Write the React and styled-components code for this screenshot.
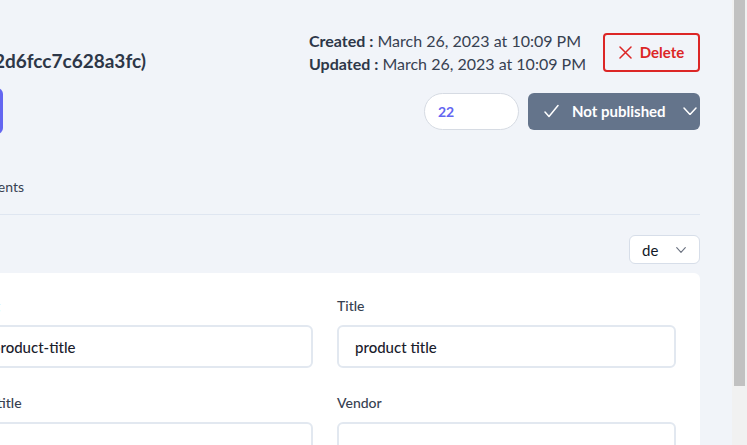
import React from "react";
import styled, { createGlobalStyle } from "styled-components";

const GlobalStyle = createGlobalStyle`
  html, body { margin: 0; padding: 0; height: 100%; overflow: hidden; }
  body { font-family: "Lato", "Noto Sans", "Liberation Sans", sans-serif; }
  * { box-sizing: border-box; }
`;

const Viewport = styled.div`
  height: 100vh;
  display: flex;
  overflow: hidden;
`;

const Main = styled.main`
  flex: 1;
  min-width: 0;
  overflow: hidden;
  background: #f1f4f9;
`;

const ScrollTrack = styled.div`
  width: 15px;
  flex: none;
  background: #f1f1f1;
  padding: 0 2px;
`;

const ScrollThumb = styled.div`
  height: 386px;
  background: #c1c1c1;
`;

const Page = styled.div`
  margin-left: -220px;
  padding: 29px 32px 24px 0;
`;

const TopRow = styled.div`
  display: flex;
  justify-content: space-between;
  align-items: flex-end;
`;

const TitleBox = styled.div`
  width: 366px;
  display: flex;
  justify-content: flex-end;
`;

const Title = styled.h1`
  margin: 0;
  font-size: 19px;
  font-weight: 700;
  line-height: 28px;
  color: #2d3748;
  white-space: nowrap;
`;

const MetaGroup = styled.div`
  display: flex;
  align-items: center;
  gap: 17px;
`;

const Dates = styled.div`
  font-size: 16px;
  line-height: 23px;
  color: #374151;
  white-space: nowrap;
`;

const DateLabel = styled.span`
  font-weight: 700;
  color: #2d3748;
`;

const DeleteButton = styled.button`
  height: 39px;
  width: 97px;
  display: flex;
  align-items: center;
  justify-content: center;
  gap: 8px;
  padding: 0;
  border: 2px solid #dc2626;
  border-radius: 4px;
  background: transparent;
  color: #dc2626;
  font-family: inherit;
  font-size: 15px;
  font-weight: 700;
`;

const SecondRow = styled.div`
  margin-top: 13px;
  height: 46px;
  display: flex;
  justify-content: space-between;
  align-items: center;
`;

const PrimaryButton = styled.button`
  width: 223px;
  height: 46px;
  border: none;
  border-radius: 6px;
  background: #6366f1;
  color: #fff;
  font-family: inherit;
  font-size: 15px;
  font-weight: 700;
`;

const Controls = styled.div`
  display: flex;
  align-items: center;
  gap: 9px;
`;

const CountInput = styled.input`
  width: 95px;
  height: 37px;
  padding: 0 13px;
  border: 1px solid #d6dbe3;
  border-radius: 19px;
  background: #fff;
  color: #6366f1;
  font-family: inherit;
  font-size: 14px;
  font-weight: 700;
  outline: none;
`;

const StatusSelect = styled.button`
  width: 172px;
  height: 37px;
  display: flex;
  align-items: center;
  padding: 0 3px 0 16px;
  border: none;
  border-radius: 6px;
  background: #64748b;
  color: #fff;
  font-family: inherit;
  font-size: 15px;
  font-weight: 700;
`;

const StatusText = styled.span`
  margin-left: 13px;
  flex: 1;
  text-align: left;
`;

const TabBar = styled.div`
  margin-top: 26px;
  border-bottom: 1px solid #dfe6f1;
`;

const TabList = styled.div`
  width: 244px;
  display: flex;
  justify-content: flex-end;
  gap: 24px;
`;

const Tab = styled.div`
  padding: 17px 0;
  font-size: 14px;
  line-height: 20px;
  color: #374151;
  white-space: nowrap;
`;

const LangRow = styled.div`
  margin-top: 20px;
  display: flex;
  justify-content: flex-end;
`;

const LangSelect = styled.button`
  width: 71px;
  height: 29px;
  display: flex;
  align-items: center;
  justify-content: space-between;
  padding: 0 13px 0 12px;
  border: 1px solid #d7dee9;
  border-radius: 6px;
  background: #fff;
  color: #111827;
  font-family: inherit;
  font-size: 15px;
`;

const Card = styled.div`
  margin-top: 9px;
  margin-left: 170px;
  background: #fff;
  border-radius: 6px;
  padding: 23px 24px 24px;
`;

const FormGrid = styled.div`
  display: grid;
  grid-template-columns: 1fr 1fr;
  gap: 25px 24px;
`;

const Field = styled.div`
  display: flex;
  flex-direction: column;
`;

const Label = styled.label`
  font-size: 14px;
  font-weight: 500;
  line-height: 20px;
  color: #374151;
  margin-bottom: 9px;
`;

const TextInput = styled.input`
  height: 43px;
  padding: 0 16px;
  border: 2px solid #e2e8f0;
  border-radius: 6px;
  background: #fff;
  color: #1a202c;
  font-family: inherit;
  font-size: 15px;
  font-weight: 500;
  outline: none;
`;

const XIcon = () => (
  <svg width="13" height="13" viewBox="0 0 13 13" fill="none" stroke="currentColor" strokeWidth="1.5" strokeLinecap="round">
    <path d="M1 1L12 12M12 1L1 12" />
  </svg>
);

const CheckIcon = () => (
  <svg width="15" height="14" viewBox="0 0 15 14" fill="none" stroke="currentColor" strokeWidth="1.5" strokeLinecap="round" strokeLinejoin="round">
    <path d="M1 8L5 12.5L14 1.5" />
  </svg>
);

const ChevronIcon = ({ size = 14, color = "currentColor", width = 1.5 }) => (
  <svg width={size} height={size * 0.6} viewBox="0 0 14 8.4" fill="none" stroke={color} strokeWidth={width} strokeLinecap="round" strokeLinejoin="round">
    <path d="M1 1L7 7.4L13 1" />
  </svg>
);

export default function App() {
  return (
    <>
      <GlobalStyle />
      <Viewport>
        <Main>
          <Page>
            <TopRow>
              <TitleBox>
                <Title>Product (6420a2d6fcc7c628a3fc)</Title>
              </TitleBox>
              <MetaGroup>
                <Dates>
                  <div><DateLabel>Created :</DateLabel> March 26, 2023 at 10:09 PM</div>
                  <div><DateLabel>Updated :</DateLabel> March 26, 2023 at 10:09 PM</div>
                </Dates>
                <DeleteButton>
                  <XIcon />
                  Delete
                </DeleteButton>
              </MetaGroup>
            </TopRow>
            <SecondRow>
              <PrimaryButton>Save</PrimaryButton>
              <Controls>
                <CountInput defaultValue="22" />
                <StatusSelect>
                  <CheckIcon />
                  <StatusText>Not published</StatusText>
                  <ChevronIcon size={14} />
                </StatusSelect>
              </Controls>
            </SecondRow>
            <TabBar>
              <TabList>
                <Tab>Details</Tab>
                <Tab>Comments</Tab>
              </TabList>
            </TabBar>
            <LangRow>
              <LangSelect>
                de
                <ChevronIcon size={10} color="#6b7280" width={1.6} />
              </LangSelect>
            </LangRow>
            <Card>
              <FormGrid>
                <Field>
                  <Label>Slug</Label>
                  <TextInput defaultValue="product-title" />
                </Field>
                <Field>
                  <Label>Title</Label>
                  <TextInput defaultValue="product title" />
                </Field>
                <Field>
                  <Label>Subtitle</Label>
                  <TextInput />
                </Field>
                <Field>
                  <Label>Vendor</Label>
                  <TextInput />
                </Field>
              </FormGrid>
            </Card>
          </Page>
        </Main>
        <ScrollTrack>
          <ScrollThumb />
        </ScrollTrack>
      </Viewport>
    </>
  );
}
